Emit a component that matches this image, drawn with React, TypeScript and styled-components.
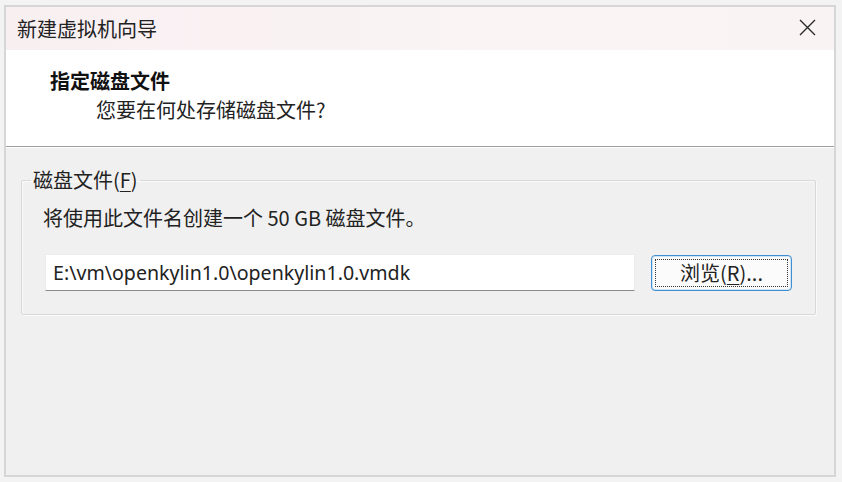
import styled, { createGlobalStyle } from "styled-components";

const GlobalStyle = createGlobalStyle`
  html, body {
    margin: 0;
    padding: 0;
    background: #f3f3f3;
  }
  body {
    font-family: "Noto Sans CJK SC", "Noto Sans", sans-serif;
    color: #1a1a1a;
  }
`

const Window = styled.div`
  margin: 5px 6px 0 4px;
  width: 832px;
  height: 472px;
  box-sizing: border-box;
  border: 2px solid #d6d6d6;
  background: #f0f0f0;
  display: flex;
  flex-direction: column;
`

const TitleBar = styled.div`
  height: 43px;
  flex-shrink: 0;
  display: flex;
  align-items: center;
  justify-content: space-between;
  padding: 0 18px 0 11px;
  background: linear-gradient(90deg, #f8eff1 0%, #faf4f5 60%, #f9f3f4 100%);
  font-size: 20px;
  line-height: 24px;
  color: #222;
`

const CloseIcon = styled.svg`
  width: 17px;
  height: 17px;
  margin-top: -2px;
`

const Header = styled.div`
  height: 97px;
  flex-shrink: 0;
  background: #ffffff;
  box-sizing: border-box;
  padding: 18px 0 0 44px;
  border-bottom: 1px solid #a0a0a0;
  box-shadow: 0 1px 0 #ffffff;
`

const HeaderTitle = styled.div`
  font-size: 20px;
  font-weight: 700;
  line-height: 26px;
  color: #111;
`

const HeaderSub = styled.div`
  font-size: 20px;
  line-height: 32px;
  padding-left: 46px;
  color: #222;
`

const Body = styled.div`
  flex: 1;
  padding: 21px 18px 0 15px;
`

const Group = styled.fieldset`
  margin: 0;
  padding: 12px 20px 23px 21px;
  border: 1px solid #d8d8d8;
  border-radius: 2px;
  box-shadow: inset 1px 1px 0 #fafafa, 1px 1px 0 #fafafa;
`

const Legend = styled.legend`
  font-size: 20px;
  line-height: 24px;
  padding: 0 2px;
  margin-left: -12px;
  color: #222;
`

const Key = styled.span`
  text-decoration: underline;
  text-underline-offset: 3px;
  text-decoration-thickness: 1px;
`

const Info = styled.div`
  font-size: 20px;
  line-height: 28px;
  color: #222;
`

const FileRow = styled.div`
  display: flex;
  align-items: center;
  gap: 16px;
  margin-top: 22px;
  padding-left: 2px;
`

const PathInput = styled.input`
  width: 590px;
  height: 37px;
  box-sizing: border-box;
  border: 1px solid #ececec;
  border-bottom: 1px solid #8a8a8a;
  background: #ffffff;
  padding: 0 7px;
  font-family: "Noto Sans", "Open Sans", sans-serif;
  font-size: 19.6px;
  color: #222;
  outline: none;
`

const BrowseButton = styled.button`
  width: 141px;
  height: 36px;
  box-sizing: border-box;
  border: 1px solid #3f8fd2;
  border-radius: 4px;
  background: #fbfbfb;
  box-shadow: inset 0 0 0 1px #cfe3f3;
  font-family: "Noto Sans CJK SC", sans-serif;
  font-size: 20px;
  line-height: 24px;
  color: #222;
  outline: 1px dotted #333;
  outline-offset: -5px;
  padding: 0;
`

const App = () => {
  return (
    <>
      <GlobalStyle />
      <Window>
        <TitleBar>
          <span>新建虚拟机向导</span>
          <CloseIcon viewBox="0 0 17 17">
            <path d="M1 1 L16 16 M16 1 L1 16" stroke="#2a2a2a" strokeWidth="1.4" fill="none" />
          </CloseIcon>
        </TitleBar>
        <Header>
          <HeaderTitle>指定磁盘文件</HeaderTitle>
          <HeaderSub>您要在何处存储磁盘文件?</HeaderSub>
        </Header>
        <Body>
          <Group>
            <Legend>
              磁盘文件(<Key>F</Key>)
            </Legend>
            <Info>将使用此文件名创建一个 50 GB 磁盘文件。</Info>
            <FileRow>
              <PathInput readOnly value="E:\vm\openkylin1.0\openkylin1.0.vmdk" />
              <BrowseButton>
                浏览(<Key>R</Key>)...
              </BrowseButton>
            </FileRow>
          </Group>
        </Body>
      </Window>
    </>
  )
}

export default App;
